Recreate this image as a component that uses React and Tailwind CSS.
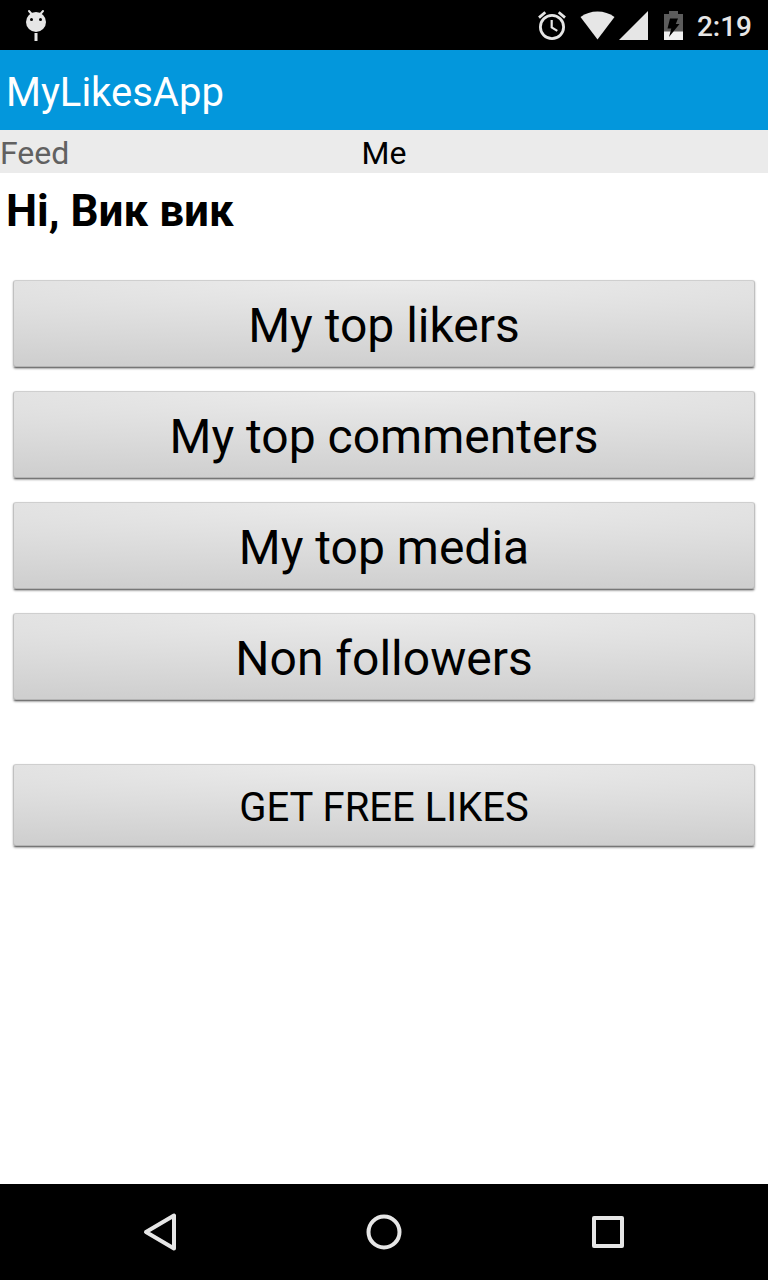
const topLists = ['My top likers', 'My top commenters', 'My top media', 'Non followers']

const BugIcon = () => (
  <svg width="24" height="32" viewBox="0 0 24 32" aria-hidden="true">
    <path d="M5 2l3 3.5M19 2l-3 3.5" stroke="#e6e6e6" strokeWidth="2" strokeLinecap="round" />
    <circle cx="12" cy="13" r="10" fill="#e6e6e6" />
    <circle cx="7.5" cy="10.5" r="1.5" fill="#000" />
    <circle cx="16.5" cy="10.5" r="1.5" fill="#000" />
    <path d="M12 24v8" stroke="#e6e6e6" strokeWidth="3" />
  </svg>
)

const AlarmIcon = () => (
  <svg width="28" height="30" viewBox="0 0 28 30" fill="none" stroke="#e6e6e6" aria-hidden="true">
    <circle cx="14" cy="17" r="11.6" strokeWidth="2.8" />
    <path d="M13.7 10v7.5l5.6 3.4" strokeWidth="2.2" />
    <path d="M1 7.6l6.3-5.3M27 7.6l-6.3-5.3" strokeWidth="2.8" />
  </svg>
)

const WifiIcon = () => (
  <svg width="35" height="29" viewBox="0 0 35 29" aria-hidden="true">
    <path d="M17.5 28.5L.5 6Q8 .5 17.5.5T34.5 6z" fill="#e6e6e6" />
  </svg>
)

const SignalIcon = () => (
  <svg width="29" height="29" viewBox="0 0 29 29" aria-hidden="true">
    <path d="M29 0v29H0z" fill="#e6e6e6" />
  </svg>
)

const BatteryIcon = () => (
  <svg width="19" height="29" viewBox="0 0 19 29" aria-hidden="true">
    <path d="M5 0h9v3h5v18H0V3h5z" fill="#5c5c5c" />
    <path d="M0 20.5h19V29H0z" fill="#f0f0f0" />
    <path d="M6 7.5h8l-2.2 5.5h3.7L5 26l2.3-8.5H3.5z" fill="#000" />
  </svg>
)

const StatusBar = () => (
  <header className="flex h-[50px] items-center justify-between bg-black pl-6 pr-4">
    <BugIcon />
    <div className="flex items-center">
      <AlarmIcon />
      <div className="ml-3.5 flex gap-1 pr-4">
        <WifiIcon />
        <SignalIcon />
      </div>
      <BatteryIcon />
      <span className="ml-3.5 pt-1 text-[28px] leading-8 font-medium text-[#e6e6e6]">2:19</span>
    </div>
  </header>
)

const PagerTabs = () => (
  <nav className="grid h-[43px] grid-cols-3 items-center bg-[#ebebeb] text-[32px] leading-10">
    <a href="#feed" className="pt-0.5 text-[#616161]">Feed</a>
    <a href="#me" aria-current="page" className="pt-0.5 text-center text-black">Me</a>
  </nav>
)

const HoloButton = ({ children, className }) => (
  <button
    type="button"
    className={`w-full rounded-[3px] border border-x-[#c0c0c0] border-t-[#cfcfcf] border-b-[#767676] bg-[radial-gradient(160%_100%_at_50%_0%,#ebebeb,#cfcfcf)] pt-1 text-black shadow-[0_1px_2px_rgba(0,0,0,0.35),inset_0_-1px_0_#b4b4b4] ${className}`}
  >
    {children}
  </button>
)

const NavBar = () => (
  <footer className="flex h-24 justify-center bg-black">
    <button type="button" aria-label="Back" className="flex w-56 items-center justify-center">
      <svg width="36" height="40" viewBox="0 0 36 40" fill="none" stroke="#e6e6e6" strokeWidth="4" strokeLinejoin="round">
        <path d="M32 3.5v33L4 20z" />
      </svg>
    </button>
    <button type="button" aria-label="Home" className="flex w-56 items-center justify-center">
      <svg width="36" height="36" viewBox="0 0 36 36" fill="none" stroke="#e6e6e6" strokeWidth="4">
        <circle cx="18" cy="18" r="15.5" />
      </svg>
    </button>
    <button type="button" aria-label="Recent apps" className="flex w-56 items-center justify-center">
      <svg width="32" height="32" viewBox="0 0 32 32" fill="none" stroke="#e6e6e6" strokeWidth="4" strokeLinejoin="round">
        <path d="M2 2h28v28H2z" />
      </svg>
    </button>
  </footer>
)

export default function App() {
  return (
    <div className="flex min-h-screen flex-col bg-white font-['Roboto',sans-serif]">
      <StatusBar />
      <div className="flex h-20 items-center bg-[#0397dc] px-1.5 pt-1.5">
        <h1 className="text-[40px] leading-12 text-white">MyLikesApp</h1>
      </div>
      <PagerTabs />
      <main className="flex-1 pt-3">
        <h2 className="px-1.5 text-[44px] leading-[52px] font-bold text-black">Hi, Вик вик</h2>
        <div className="flex flex-col gap-[23px] px-[13px] pt-[43px]">
          {topLists.map((label) => (
            <HoloButton key={label} className="h-[88px] text-[48px] leading-14">{label}</HoloButton>
          ))}
        </div>
        <div className="px-[13px] pt-[63px] pb-6">
          <HoloButton className="h-[83px] text-[40px] leading-12">GET FREE LIKES</HoloButton>
        </div>
      </main>
      <NavBar />
    </div>
  )
}
